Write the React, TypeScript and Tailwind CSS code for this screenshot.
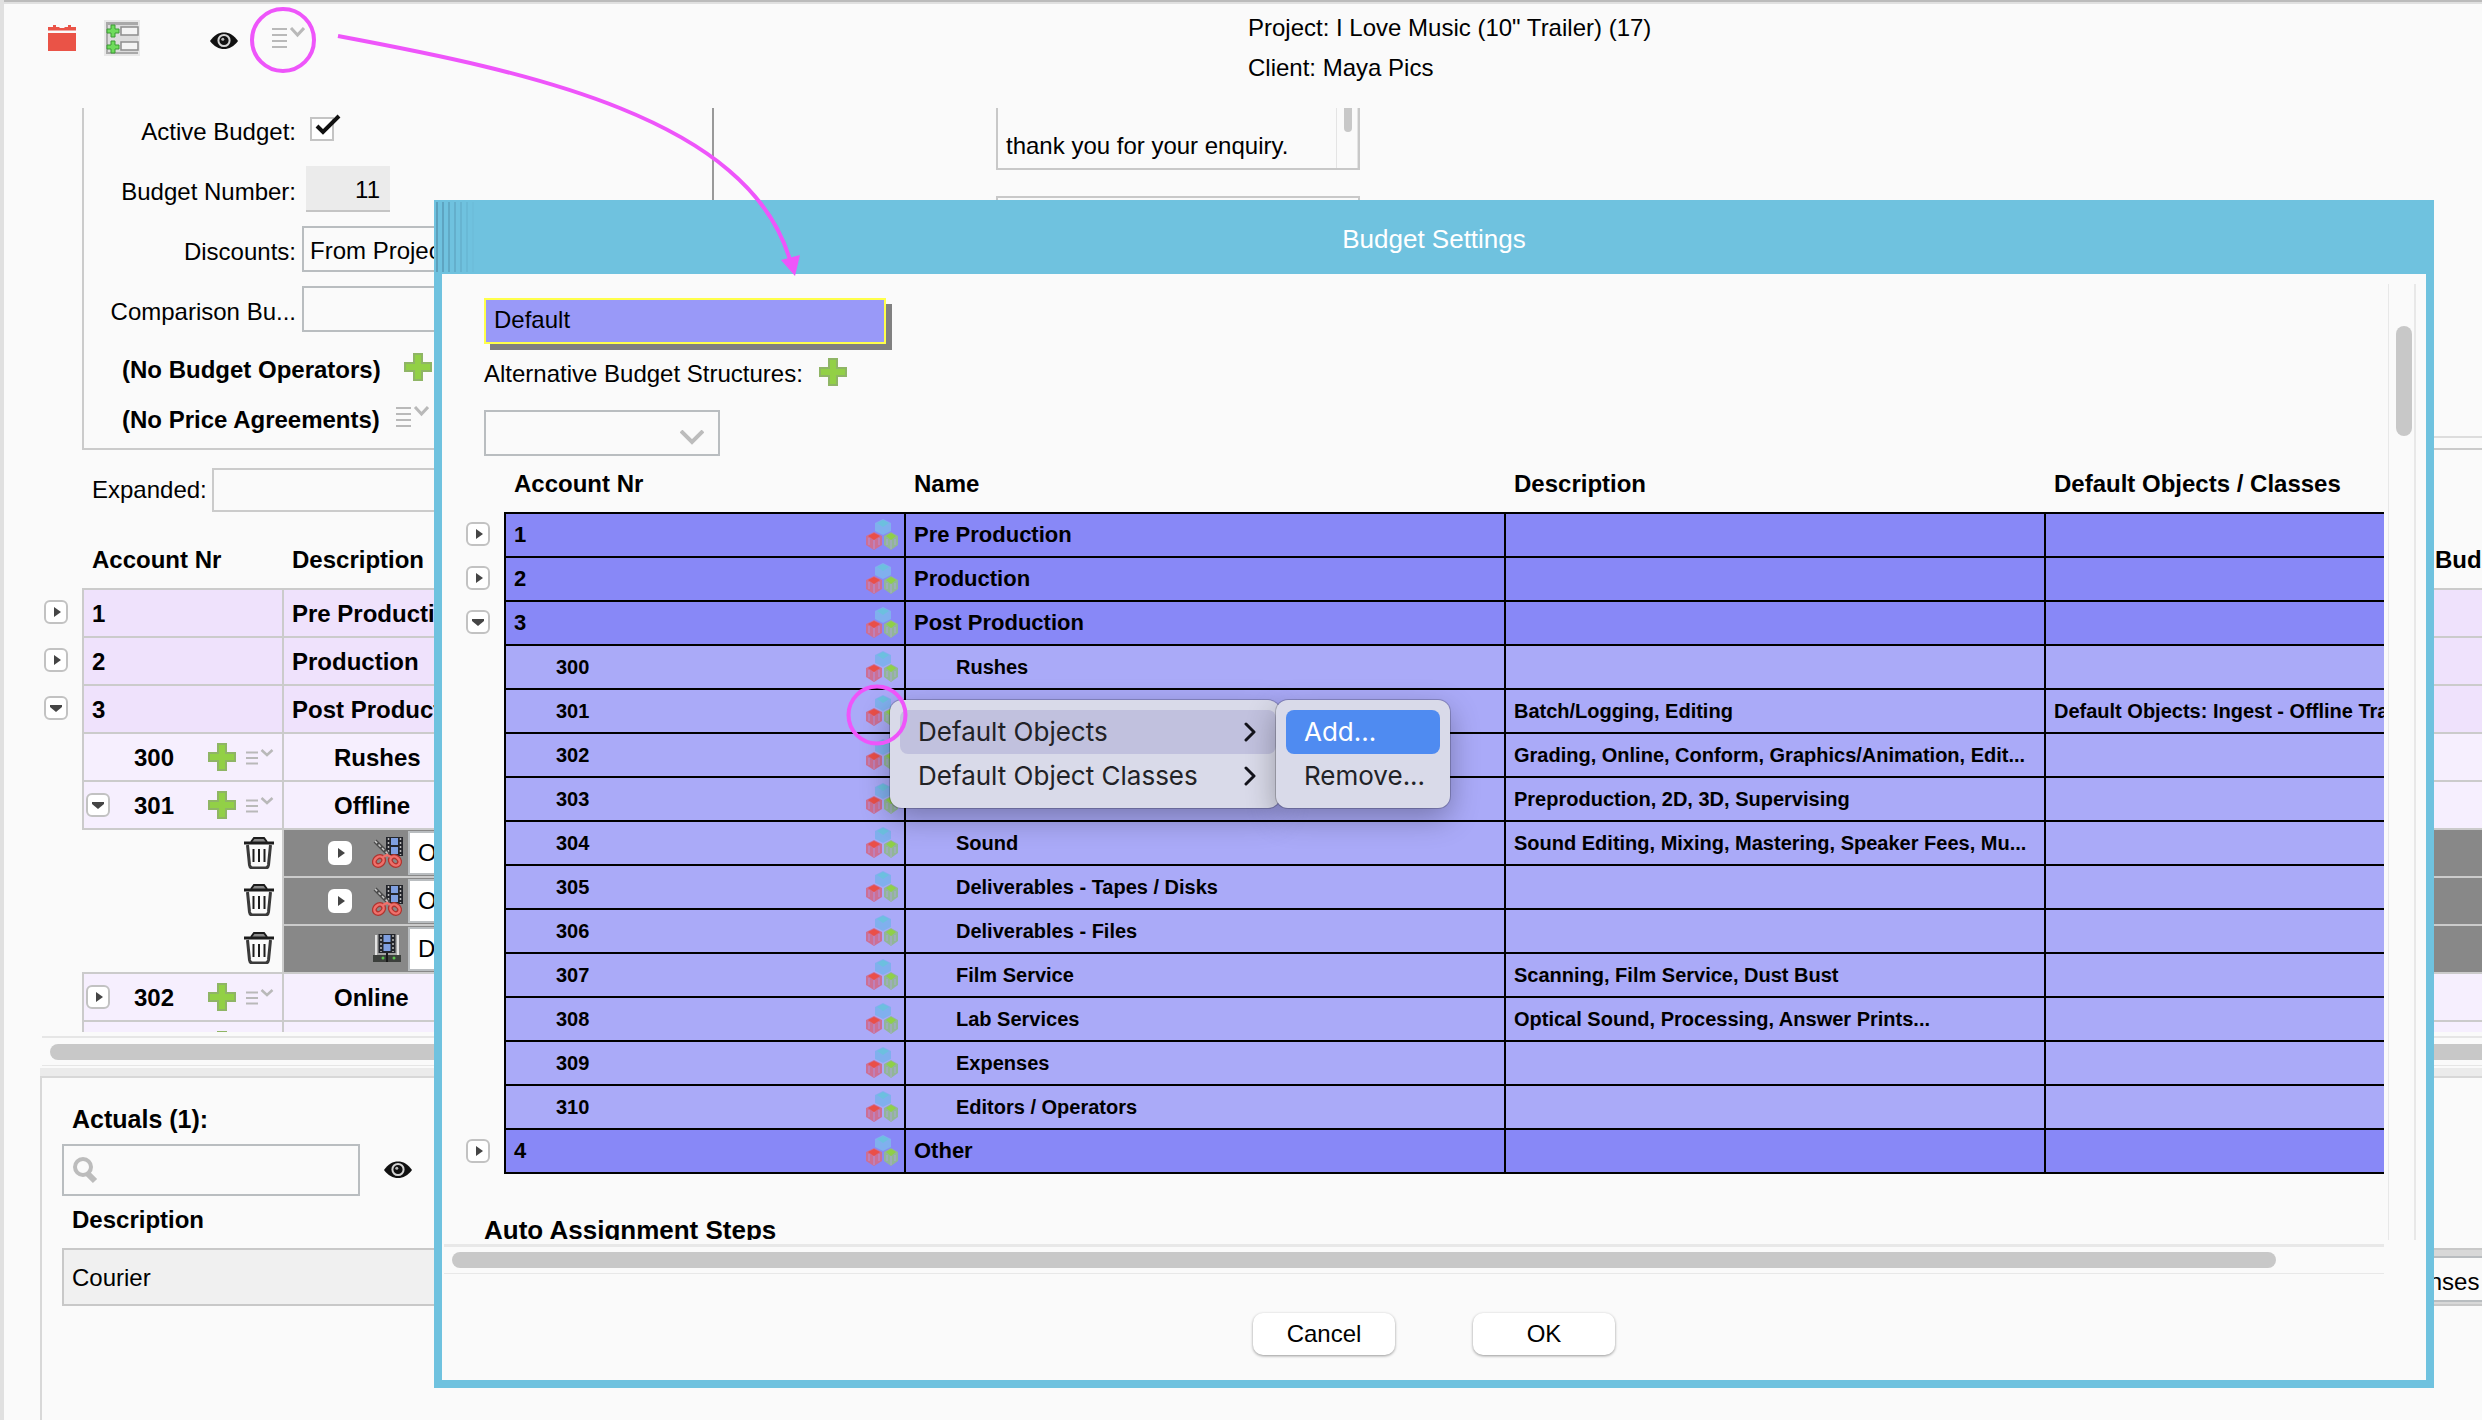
import type { ReactNode } from 'react';

interface Account {
  nr: string;
  name?: string;
  description?: string;
  defaults?: string;
  open?: boolean;
}

const ACCOUNTS: Account[] = [
  { nr: '1', name: 'Pre Production' },
  { nr: '2', name: 'Production' },
  { nr: '3', name: 'Post Production', open: true },
  { nr: '300', name: 'Rushes' },
  {
    nr: '301',
    description: 'Batch/Logging, Editing',
    defaults: 'Default Objects: Ingest - Offline Transfer',
  },
  { nr: '302', description: 'Grading, Online, Conform, Graphics/Animation, Edit...' },
  { nr: '303', description: 'Preproduction, 2D, 3D, Supervising' },
  { nr: '304', name: 'Sound', description: 'Sound Editing, Mixing, Mastering, Speaker Fees, Mu...' },
  { nr: '305', name: 'Deliverables - Tapes / Disks' },
  { nr: '306', name: 'Deliverables - Files' },
  { nr: '307', name: 'Film Service', description: 'Scanning, Film Service, Dust Bust' },
  { nr: '308', name: 'Lab Services', description: 'Optical Sound, Processing, Answer Prints...' },
  { nr: '309', name: 'Expenses' },
  { nr: '310', name: 'Editors / Operators' },
  { nr: '4', name: 'Other' },
];

/* ---------- icons ---------- */

function PlusIcon() {
  return (
    <svg width="28" height="28" viewBox="0 0 28 28">
      <path d="M10 1h8v9h9v8h-9v9h-8v-9H1v-8h9z" fill="#92d046" stroke="#8fb565" strokeWidth="2" />
    </svg>
  );
}

function MenuIcon() {
  return (
    <svg width="33" height="22" viewBox="0 0 33 22" fill="none" stroke="#b9b9b9" strokeWidth="2">
      <path d="M0 2h15M0 8h15M0 14h15M0 20h15" />
      <path d="M19 1l6.5 7L32 1" strokeWidth="3" />
    </svg>
  );
}

function SmallMenuIcon() {
  return (
    <svg width="28" height="18" viewBox="0 0 28 18" fill="none" stroke="#b9b9b9" strokeWidth="1.8">
      <path d="M0 4.500h12M0 10h12M0 15.500h12" />
      <path d="M15.500 2l5.500 5 5.500-5" strokeWidth="2.500" />
    </svg>
  );
}

function EyeIcon() {
  return (
    <svg width="28" height="22" viewBox="0 2 28 22">
      <path d="M0 13C4 7 9 4.500 14 4.500S24 7 28 13c-4 5.500-9 8-14 8S4 18.500 0 13z" fill="#111" />
      <circle cx="14" cy="12.500" r="5.600" fill="none" stroke="#d4d4d4" strokeWidth="2" />
      <circle cx="12.800" cy="11.200" r="1.500" fill="#bbb" />
    </svg>
  );
}

function CalendarIcon() {
  return (
    <svg width="28" height="26" viewBox="0 0 28 26" fill="#ea5347">
      <path d="M0 2h5V0h3v2h3l1 1h4l1-1h3V0h3v2h5v3.500H0z" />
      <path d="M0 8h28v18H0z" />
    </svg>
  );
}

function AddListIcon() {
  const plus = 'M7 0h4v4h4v4h-4v4H7V8H3V4h4z';
  return (
    <svg width="36" height="36" viewBox="0 0 36 36">
      <rect width="36" height="36" fill="#e8e8e8" />
      <rect x="2" y="2" width="32" height="32" fill="#a9a9a9" />
      <rect x="4" y="5" width="30" height="27" fill="#dcdcdc" />
      <rect x="17" y="7" width="17" height="8" fill="#f4f4f4" stroke="#8d8d8d" strokeWidth="1.500" />
      <rect x="17" y="22" width="17" height="8" fill="#f4f4f4" stroke="#8d8d8d" strokeWidth="1.500" />
      <path d={plus} transform="translate(0 5)" fill="#6fdc5c" stroke="#3c9a35" />
      <path d={plus} transform="translate(0 21)" fill="#6fdc5c" stroke="#3c9a35" />
    </svg>
  );
}

function CubesIcon() {
  return (
    <svg width="32" height="32" viewBox="0 0 32 32">
      <g>
        <path d="M17 0l8 4v8l-8 4-8-4V4z" fill="#80b0ee" />
        <path d="M17 1l6 3-6 4-6-4z" fill="#6cc0df" />
      </g>
      <g>
        <path d="M8 13l8 4v9l-8 5-8-5v-9z" fill="#cd6f94" />
        <path d="M8 14l6 3-6 4-6-4z" fill="#ea4f48" />
        <path d="M8 21v9M3 19v7M13 19v7" stroke="#bb86c4" strokeWidth="1.500" />
      </g>
      <g>
        <path d="M25 13l7 4v9l-7 5-7-5v-9z" fill="#92b697" />
        <path d="M25 14l5 3-5 4-5-4z" fill="#8fd047" />
        <path d="M25 21v9M21 20v6M29 20v6" stroke="#a3acc4" strokeWidth="1.500" />
      </g>
    </svg>
  );
}

function TrashIcon() {
  return (
    <svg width="30" height="32" viewBox="0 0 30 32" fill="none" stroke="#1c1c1c" strokeWidth="2">
      <path d="M7 5l3-4h10l3 4" fill="#8a8a8a" />
      <path d="M0 6h30" strokeWidth="3" />
      <path d="M3.500 8l2 20q.5 3 3 3h13q2.500 0 3-3l2-20" strokeWidth="3" stroke="#3a3a3a" />
      <path d="M9.500 12v13M15 12v13M20.500 12v13" />
    </svg>
  );
}

function FilmStrip() {
  return (
    <g>
      <rect width="17" height="19" fill="#23252b" />
      <rect x="5" y="1" width="7" height="7" fill="#7f9fe0" />
      <rect x="5" y="10" width="7" height="7" fill="#7f9fe0" />
      <path d="M2.500 1v17M14.500 1v17" stroke="#b9b9b9" strokeWidth="1.500" strokeDasharray="2 2" />
    </g>
  );
}

function CutIcon() {
  return (
    <svg width="32" height="32" viewBox="0 0 32 32">
      <g transform="translate(14 0)">
        <FilmStrip />
      </g>
      <path d="M3 4l14 14" stroke="#4b4b4b" strokeWidth="4" />
      <path d="M3 4l14 14" stroke="#c9c9c9" strokeWidth="1.500" strokeDasharray="3 2" />
      <g fill="none" stroke="#b0342f" strokeWidth="5">
        <ellipse cx="7" cy="24" rx="4" ry="5" transform="rotate(50 7 24)" />
        <ellipse cx="23" cy="24" rx="4" ry="5" transform="rotate(-50 23 24)" />
      </g>
      <g fill="none" stroke="#ef706b" strokeWidth="2.500">
        <ellipse cx="7" cy="24" rx="4" ry="5" transform="rotate(50 7 24)" />
        <ellipse cx="23" cy="24" rx="4" ry="5" transform="rotate(-50 23 24)" />
        <path d="M11 20l4-2 4 2" />
      </g>
    </svg>
  );
}

function IngestIcon() {
  return (
    <svg width="32" height="32" viewBox="0 0 32 32">
      <path d="M3 2h24v20H3z" fill="#a4a4a4" />
      <path d="M4 2v20M26 2v20" stroke="#e2e2e2" strokeWidth="2" />
      <g transform="translate(6.500 1)">
        <FilmStrip />
      </g>
      <path d="M1 22h28v7H1z" fill="#3c3f3c" />
      <path d="M15 20v9" stroke="#191919" strokeWidth="2" />
      <circle cx="11" cy="25" r="1.500" fill="#59c44c" />
      <circle cx="22" cy="25" r="1.500" fill="#59c44c" />
    </svg>
  );
}

function Expander({ open = false, plain = false }: { open?: boolean; plain?: boolean }) {
  return (
    <button
      aria-label={open ? 'Collapse' : 'Expand'}
      className={`flex size-6 shrink-0 items-center justify-center rounded-md border-2 bg-white ${
        plain ? 'border-white' : 'border-[#c2c2c2]'
      }`}
    >
      <svg width="12" height="12" viewBox="0 0 12 12" fill="#454545">
        {open ? <path d="M0 3h12v2L6 10 0 5z" /> : <path d="M4 1l7 5-7 5z" />}
      </svg>
    </button>
  );
}

/* ---------- page behind the dialog ---------- */

function FormRow({ id, label, children }: { id: string; label: string; children: ReactNode }) {
  return (
    <div className="flex h-[46px] items-center gap-1.5">
      <label htmlFor={id} className="w-[212px] shrink-0 pt-1.5 text-right">
        {label}
      </label>
      {children}
    </div>
  );
}

function BudgetForm() {
  return (
    <div className="ml-10 flex h-[342px] border-b-2 border-l-2 border-[#cbcbcb]">
      <div className="w-[630px] shrink-0 border-r-2 border-[#999999]">
        <div className="-mt-0.5 flex flex-col gap-3.5">
          <FormRow id="active" label="Active Budget:">
            <div className="relative ml-2 size-6">
              <input
                id="active"
                type="checkbox"
                defaultChecked
                className="block size-6 appearance-none border-2 border-[#c4c4c4] bg-white"
              />
              <svg
                className="pointer-events-none absolute -top-1 left-1"
                width="28"
                height="24"
                viewBox="0 0 28 24"
                fill="none"
                stroke="#111"
                strokeWidth="4"
              >
                <path d="M3 13l6 6L25 3" />
              </svg>
            </div>
          </FormRow>
          <FormRow id="number" label="Budget Number:">
            <input
              id="number"
              defaultValue="11"
              className="ml-1 h-[46px] w-[84px] border-b-2 border-[#c4c4c4] bg-[#ebebeb] pt-1 pr-2.5 text-right"
            />
          </FormRow>
          <FormRow id="discounts" label="Discounts:">
            <select
              id="discounts"
              className="h-[46px] w-[300px] appearance-none border-2 border-[#b9bdc0] pt-1 pl-1.5"
            >
              <option>From Project</option>
            </select>
          </FormRow>
          <FormRow id="comparison" label="Comparison Bu...">
            <select id="comparison" className="h-[46px] w-[300px] appearance-none border-2 border-[#b9bdc0]" />
          </FormRow>
        </div>
        <div className="mt-2.5 pl-[38px] font-bold">
          <div className="flex h-[50px] items-center">
            <span className="w-[282px] pt-1.5">(No Budget Operators)</span>
            <button aria-label="Add operator">
              <PlusIcon />
            </button>
          </div>
          <div className="flex h-[50px] items-center">
            <span className="w-[274px] pt-1.5">(No Price Agreements)</span>
            <button aria-label="Price agreement menu">
              <MenuIcon />
            </button>
          </div>
        </div>
      </div>
      <div className="mb-2.5 flex-1 border-b-2 border-[#dddddd] pl-[282px]">
        <div className="flex h-[62px] w-[364px] border-x-2 border-b-2 border-[#c8c8c8]">
          <textarea
            aria-label="Letter text"
            rows={1}
            defaultValue="thank you for your enquiry."
            className="h-full min-w-0 flex-1 resize-none overflow-hidden pt-[22px] pl-2 leading-8"
          />
          <div className="w-[22px] border-x border-[#e4e4e4] pl-[7px]">
            <div className="h-6 w-2 rounded-b-full bg-[#c8c8c8]" />
          </div>
        </div>
        <div className="mt-[26px] h-[62px] w-[364px] border-2 border-[#c8c8c8]" />
      </div>
    </div>
  );
}

function BudgetRow({ nr, name, open = false }: { nr: string; name: string; open?: boolean }) {
  const main = nr.length === 1;
  const cell = `h-12 border-t-2 border-l-2 border-[#cbcbcb] p-0 ${main ? 'bg-[#efe2fc]' : 'bg-[#f6effe]'}`;
  return (
    <tr>
      <td className="p-0 pl-0.5">{main && <Expander open={open} />}</td>
      <td className={cell}>
        {main ? (
          <div className="pt-0.5 pl-2">{nr}</div>
        ) : (
          <div className="flex items-center">
            <div className="w-[50px] pl-0.5">{(nr === '301' || nr === '302') && <Expander open={open} />}</div>
            <span className="w-[74px] pt-0.5">{nr}</span>
            <button aria-label="Add">
              <PlusIcon />
            </button>
            <button aria-label="Menu" className="ml-2.5">
              <SmallMenuIcon />
            </button>
          </div>
        )}
      </td>
      <td className={cell}>
        <div className={main ? 'pt-0.5 pl-2' : 'pt-0.5 pl-[50px]'}>{name}</div>
      </td>
      <td className={cell} />
    </tr>
  );
}

interface ItemRowProps {
  name: string;
  icon: ReactNode;
  expandable?: boolean;
  first?: boolean;
}

function ItemRow({ name, icon, expandable = false, first = false }: ItemRowProps) {
  return (
    <tr>
      <td />
      <td className={first ? 'border-t-2 border-[#cbcbcb] p-0' : 'p-0'}>
        <div className="flex justify-end pr-2">
          <button aria-label="Delete">
            <TrashIcon />
          </button>
        </div>
      </td>
      <td className="h-12 border-t-2 border-l-2 border-[#cbcbcb] bg-[#888888] p-0">
        <div className="flex items-center">
          <div className="w-[88px] pl-11">{expandable && <Expander plain />}</div>
          <div className="w-9">{icon}</div>
          <input
            aria-label="Item name"
            defaultValue={name}
            className="h-11 w-[400px] border-2 border-[#b9bdc0] bg-white pl-2 font-normal"
          />
        </div>
      </td>
      <td className="border-t-2 border-[#cbcbcb] bg-[#888888]" />
    </tr>
  );
}

function BudgetTable() {
  return (
    <table className="w-full table-fixed border-separate border-spacing-0 text-left font-bold whitespace-nowrap">
      <colgroup>
        <col className="w-10" />
        <col className="w-[200px]" />
        <col />
        <col className="w-[55px]" />
      </colgroup>
      <thead>
        <tr>
          <th className="h-[76px] p-0" />
          <th className="p-0 pt-5 pl-2.5">Account Nr</th>
          <th className="p-0 pt-5 pl-2.5">Description</th>
          <th className="overflow-hidden p-0 pt-5 pl-2">Budget</th>
        </tr>
      </thead>
      <tbody>
        <BudgetRow nr="1" name="Pre Production" />
        <BudgetRow nr="2" name="Production" />
        <BudgetRow nr="3" name="Post Production" open />
        <BudgetRow nr="300" name="Rushes" />
        <BudgetRow nr="301" name="Offline" open />
        <ItemRow name="Offline" icon={<CutIcon />} expandable first />
        <ItemRow name="Offline" icon={<CutIcon />} expandable />
        <ItemRow name="Digitise" icon={<IngestIcon />} />
        <BudgetRow nr="302" name="Online" />
        <BudgetRow nr="303" name="VFX" />
      </tbody>
    </table>
  );
}

function Actuals() {
  return (
    <section className="flex-1 border-t-2 border-l-2 border-[#d8d8d8] pt-4 pl-5">
      <label htmlFor="search" className="block pl-2.5 text-[25px] leading-[50px] font-bold">
        Actuals (1):
      </label>
      <div className="flex items-center gap-6">
        <div className="flex h-[52px] w-[298px] items-center border-2 border-[#b9bdc0] pl-2">
          <svg width="26" height="28" viewBox="0 0 26 28" fill="none" stroke="#bcbcbc">
            <circle cx="11" cy="11" r="8" strokeWidth="4" />
            <path d="M16 18l7 7" strokeWidth="6" />
          </svg>
          <input id="search" className="h-full min-w-0 flex-1 pl-2" />
        </div>
        <button aria-label="Show">
          <EyeIcon />
        </button>
      </div>
      <table className="w-full border-separate border-spacing-0 text-left">
        <thead>
          <tr>
            <th className="h-[52px] p-0 pb-1 pl-2.5">Description</th>
            <th />
          </tr>
        </thead>
        <tbody>
          <tr>
            <td className="h-[58px] border-2 border-r-0 border-[#c8c8c8] bg-[#f0f0f0] p-0 pt-0.5 pl-2">
              Courier
            </td>
            <td className="w-[116px] border-y-2 border-[#c8c8c8] bg-[#d8d8d8] p-0 pt-1 align-middle">
              <select
                aria-label="Type"
                className="block h-[46px] w-full appearance-none border-y-2 border-l-2 border-[#b9bdc0] bg-[#fafafa] pt-1.5 pl-1.5"
              >
                <option>Expenses</option>
              </select>
            </td>
          </tr>
        </tbody>
      </table>
    </section>
  );
}

/* ---------- dialog ---------- */

function SettingsRow({ account, last }: { account: Account; last: boolean }) {
  const main = account.nr.length === 1;
  const cell = `border-t-2 border-l-2 border-black overflow-hidden p-0 ${
    last ? 'h-[46px] border-b-2' : 'h-11'
  } ${main ? 'bg-[#8888f7] text-[22px]' : 'bg-[#aaaaf8] text-xl'}`;
  return (
    <tr>
      <td className="p-0 pl-0.5">{main && <Expander open={account.open} />}</td>
      <td className={cell}>
        <div className={`flex items-center justify-between pr-1.5 ${main ? 'pl-2' : 'pl-[50px]'}`}>
          {account.nr}
          <button aria-label="Default objects">
            <CubesIcon />
          </button>
        </div>
      </td>
      <td className={cell}>
        <span className={main ? 'pl-2' : 'pl-[50px]'}>{account.name}</span>
      </td>
      <td className={`${cell} leading-8`}>
        <span className="pl-2">{account.description}</span>
      </td>
      <td className={cell}>
        <span className="pl-2">{account.defaults}</span>
      </td>
    </tr>
  );
}

function SettingsTable() {
  return (
    <table className="w-full table-fixed border-separate border-spacing-0 text-left font-bold whitespace-nowrap">
      <colgroup>
        <col className="w-10" />
        <col className="w-[400px]" />
        <col className="w-[600px]" />
        <col className="w-[540px]" />
        <col />
      </colgroup>
      <thead>
        <tr>
          <th className="h-14 p-0" />
          <th className="p-0 pl-2.5">Account Nr</th>
          <th className="p-0 pl-2.5">Name</th>
          <th className="p-0 pl-2.5">Description</th>
          <th className="p-0 pl-2.5">Default Objects / Classes</th>
        </tr>
      </thead>
      <tbody>
        {ACCOUNTS.map((account, i) => (
          <SettingsRow key={account.nr} account={account} last={i === ACCOUNTS.length - 1} />
        ))}
      </tbody>
    </table>
  );
}

function MenuChevron() {
  return (
    <svg width="12" height="20" viewBox="0 0 12 20" fill="none" stroke="#14141c" strokeWidth="3">
      <path d="M2 2l8 8-8 8" strokeLinecap="round" strokeLinejoin="round" />
    </svg>
  );
}

function ContextMenu() {
  const panel = 'rounded-xl bg-[#d9dae9] px-2.5 py-2.5 ring-1 ring-black/20 shadow-[0_10px_30px_rgba(0,0,0,0.3)]';
  const item = 'flex h-11 w-full items-center rounded-lg text-left pl-[18px]';
  return (
    <div className="absolute top-[500px] left-[448px] flex font-[Inter,sans-serif] text-[26px] text-[#222226]">
      <div className={`${panel} w-[390px] pr-1`}>
        <button className={`${item} justify-between bg-[#c1c1de] pr-5`}>
          Default Objects
          <MenuChevron />
        </button>
        <button className={`${item} justify-between pr-5`}>
          Default Object Classes
          <MenuChevron />
        </button>
      </div>
      <div className={`${panel} -ml-1 w-[174px]`}>
        <button className={`${item} bg-[#4f8bf1] text-white`}>Add...</button>
        <button className={item}>Remove...</button>
      </div>
    </div>
  );
}

function BudgetSettings() {
  const button =
    'h-[42px] w-[142px] rounded-[10px] bg-white shadow-[0_1px_3px_rgba(0,0,0,0.4)]';
  return (
    <div
      role="dialog"
      aria-label="Budget Settings"
      className="absolute top-[200px] right-12 left-[430px] border-8 border-t-0 border-[#6fc2df] bg-[#fafafa]"
    >
      <div className="relative -mx-2 flex h-[74px] items-center justify-center bg-[#6fc2df] pt-1 text-[26px] text-white">
        <svg className="absolute top-0.5 left-0.5" width="40" height="70" stroke="#5797b3" strokeWidth="2">
          {[0, 1, 2, 3, 4, 5, 6].map((i) => (
            <path key={i} d={`M${1 + i * 6} 0v70`} strokeOpacity={0.8 - i * 0.12} />
          ))}
        </svg>
        Budget Settings
      </div>
      <div className="flex">
        <div className="h-[calc(100vh-454px)] min-w-0 flex-1 overflow-hidden pt-6 pl-[22px]">
          <div className="pl-5">
            <input
              aria-label="Structure"
              defaultValue="Default"
              className="block h-[46px] w-[402px] border-2 border-[#ffff4a] bg-[#9999f8] pb-0.5 pl-2 shadow-[6px_6px_0_#808080]"
            />
            <div className="mt-2 flex h-[58px] items-start gap-4">
              <label htmlFor="alternative" className="pt-2">
                Alternative Budget Structures:
              </label>
              <button aria-label="Add structure" className="pt-1.5">
                <PlusIcon />
              </button>
            </div>
            <div className="relative w-[236px]">
              <select
                id="alternative"
                className="block h-[46px] w-full appearance-none border-2 border-[#b9bdc0]"
              />
              <svg
                className="pointer-events-none absolute top-5 right-4"
                width="24"
                height="15"
                viewBox="0 0 24 15"
                fill="none"
                stroke="#bcbcbc"
                strokeWidth="4"
              >
                <path d="M1 1l11 11L23 1" />
              </svg>
            </div>
          </div>
          <SettingsTable />
          <h2 className="mt-10 pl-5 text-[26px] leading-8 font-bold">Auto Assignment Steps</h2>
        </div>
        <div className="mt-2.5 mr-2.5 ml-1 w-7 border-r-2 border-l border-[#e8e8e8] pl-[7px]">
          <div className="mt-[42px] h-[110px] w-4 rounded-full bg-[#c8c8c8]" />
        </div>
      </div>
      <div className="mt-1 mr-[42px] ml-0.5 border-t-[3px] border-b border-[#e8e8e8] py-[5px] pr-[108px] pl-2">
        <div className="h-4 rounded-full bg-[#c8c8c8]" />
      </div>
      <div className="flex justify-center gap-[78px] pt-[39px] pb-[25px]">
        <button className={button}>Cancel</button>
        <button className={button}>OK</button>
      </div>
      <ContextMenu />
    </div>
  );
}

function Annotations() {
  return (
    <svg
      className="pointer-events-none absolute top-0 -left-1"
      width="1000"
      height="800"
      fill="none"
      stroke="#ee55fa"
      strokeWidth="4"
    >
      <circle cx="283" cy="40" r="31" />
      <circle cx="877" cy="715" r="28.500" />
      <path d="M338 36C530 72 748 118 790 260" />
      <path d="M781 260l19-5-5 21z" fill="#ee55fa" stroke="none" />
    </svg>
  );
}

export default function App() {
  return (
    <div className="relative flex min-h-screen flex-col overflow-hidden border-l-4 border-[#e0e0e0] bg-[#fafafa] font-['Liberation_Sans',Arial,sans-serif] text-2xl leading-7 text-black">
      <div className="-ml-1 h-1 border-t-2 border-[#bbbbbb] bg-[#e0e0e0]" />
      <header className="grid h-[104px] shrink-0 grid-cols-2">
        <div className="flex h-[68px] items-center pl-11">
          <button aria-label="Calendar">
            <CalendarIcon />
          </button>
          <button aria-label="Add rows" className="ml-7">
            <AddListIcon />
          </button>
          <button aria-label="Show" className="ml-[70px] pt-1.5">
            <EyeIcon />
          </button>
          <button aria-label="Settings" className="ml-[34px]">
            <MenuIcon />
          </button>
        </div>
        <div className="pt-1 pl-[5px] leading-10">
          <p>Project: I Love Music (10" Trailer) (17)</p>
          <p>Client: Maya Pics</p>
        </div>
      </header>
      <main className="ml-9 flex flex-1 flex-col">
        <div className="ml-0.5 h-[calc(100vh-496px)] overflow-hidden">
          <BudgetForm />
          <div className="mt-[18px] ml-[50px] flex h-11 items-center">
            <label htmlFor="expanded" className="w-[120px]">
              Expanded:
            </label>
            <select id="expanded" className="h-full w-[400px] appearance-none border-2 border-[#cbcbcb]" />
          </div>
          <BudgetTable />
        </div>
        <div className="mt-1 mb-0.5 ml-0.5 border-t-2 border-b border-[#e6e6e6] pt-1.5 pb-[5px] pl-2">
          <div className="h-4 rounded-l-full bg-[#c8c8c8]" />
        </div>
        <div className="h-2 bg-[#ebebeb]" />
        <Actuals />
      </main>
      <BudgetSettings />
      <Annotations />
    </div>
  );
}
